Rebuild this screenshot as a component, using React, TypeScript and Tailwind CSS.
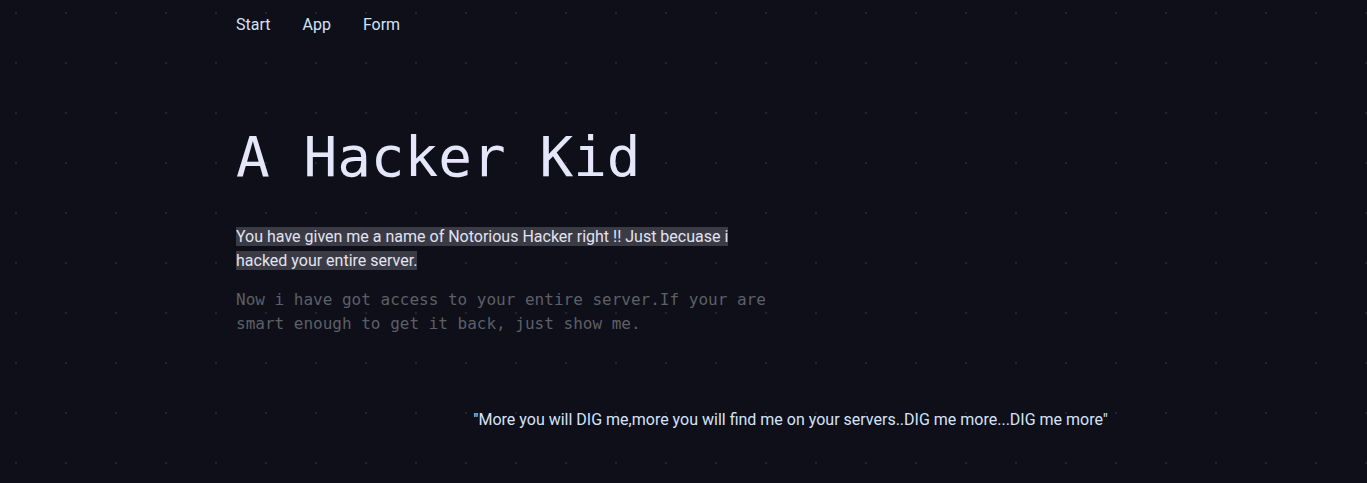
export default function App() {
  return (
    <div className="min-h-screen bg-[#0e0f19] bg-[radial-gradient(circle,#23242f_1px,transparent_1.5px)] bg-[size:50px_50px] bg-[position:-9px_-12px] font-['Roboto',sans-serif]">
      <div className="mx-auto w-[895px]">
        <nav className="flex gap-8 pt-[13px] text-base text-[#d2e2f7]">
          <a href="#">Start</a>
          <a href="#">App</a>
          <a href="#">Form</a>
        </nav>

        <h1 className="mt-[87px] font-['DejaVu_Sans_Mono',monospace] text-[56px] leading-[66px] text-[#e6e6fa]">
          A Hacker Kid
        </h1>

        <div className="mt-[35px] w-[540px]">
          <p className="text-base leading-6 text-[#e2e3f2]">
            <span className="bg-[#3a3b45] box-decoration-clone">
              You have given me a name of Notorious Hacker right !! Just becuase i hacked your entire server.
            </span>
          </p>
          <p className="mt-[15px] font-['DejaVu_Sans_Mono',monospace] text-base leading-6 text-[#5d5f68]">
            Now i have got access to your entire server.If your are smart enough to get it back, just show me.
          </p>
        </div>

        <p className="mt-[72px] pr-[23px] text-right text-base text-[#d4e3fa]">
          "More you will DIG me,more you will find me on your servers..DIG me more...DIG me more"
        </p>
      </div>
    </div>
  );
}
